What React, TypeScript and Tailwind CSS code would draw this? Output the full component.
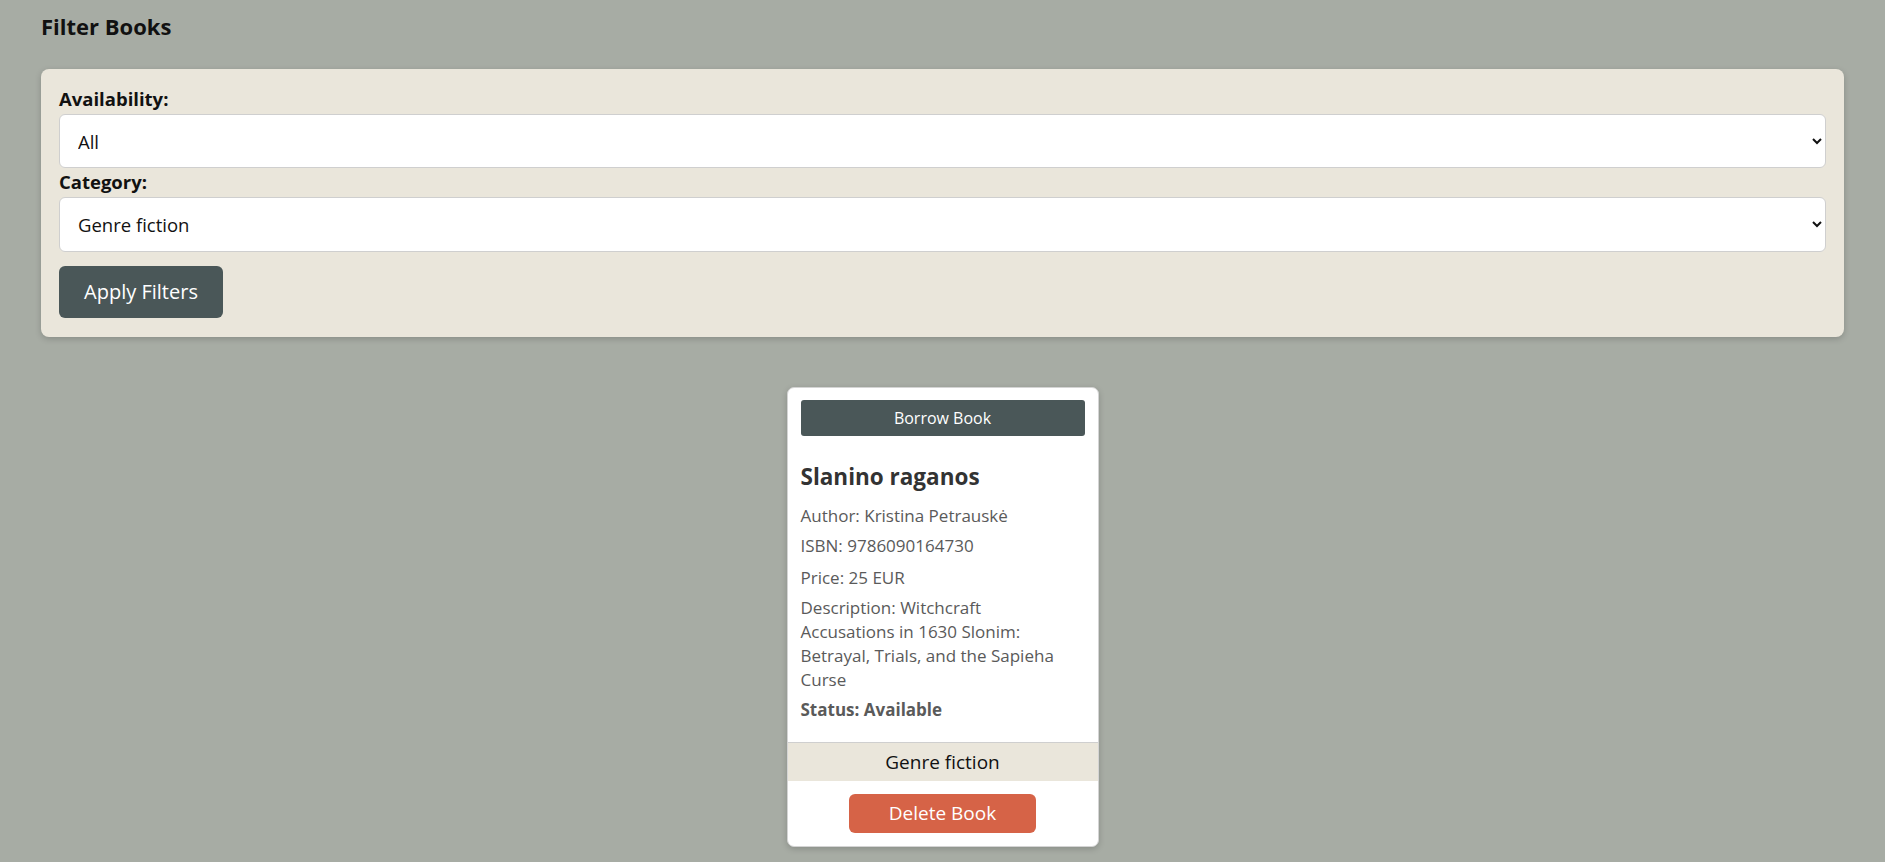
import React from "react";

export default function App() {
  return (
    <div className="min-h-screen bg-[#a7aca4] px-[41px] pt-[12px] pb-[16px] font-['Open_Sans','Noto_Sans',sans-serif] text-[#111]">
      <h2 className="text-[22px] font-bold leading-[29px] text-[#111]">Filter Books</h2>
      <div className="mt-[28px] rounded-[8px] bg-[#eae6db] px-[18px] pt-[19px] pb-[19px] shadow-[0_2px_6px_rgba(0,0,0,0.18)]">
        <label className="block text-[18.5px] font-bold leading-[22px] mb-[4px]">Availability:</label>
        <select
          defaultValue="All"
          className="block w-full h-[54px] rounded-[6px] border border-[#cfcfcf] bg-white pl-[14px] pr-[8px] text-[18.5px] text-[#111]"
        >
          <option>All</option>
          <option>Available</option>
          <option>Borrowed</option>
        </select>
        <label className="block text-[18.5px] font-bold leading-[22px] mt-[3px] mb-[4px]">Category:</label>
        <select
          defaultValue="Genre fiction"
          className="block w-full h-[55px] rounded-[6px] border border-[#cfcfcf] bg-white pl-[14px] pr-[8px] text-[18.5px] text-[#111]"
        >
          <option>Genre fiction</option>
          <option>Literary fiction</option>
          <option>Non-fiction</option>
        </select>
        <button className="mt-[14px] h-[52px] w-[164px] rounded-[6px] bg-[#4a5758] text-[20px] text-white">
          Apply Filters
        </button>
      </div>

      <div className="mx-auto mt-[50px] w-[312px] overflow-hidden rounded-[7px] border border-[#d4d4d4] bg-white shadow-[0_2px_6px_rgba(0,0,0,0.18)]">
        <div className="px-[13px] pt-[12px] pb-[20px]">
          <button className="block h-[36px] w-full rounded-[3px] bg-[#4a5758] text-[16px] text-white">
            Borrow Book
          </button>
          <h3 className="mt-[26px] text-[22.5px] font-bold leading-[29px] text-[#333]">Slanino raganos</h3>
          <div className="mt-[13px] text-[17px] leading-[24px] text-[#5a5a5a]">
            <p className="mb-[6px]">Author: Kristina Petrauskė</p>
            <p className="mb-[8px]">ISBN: 9786090164730</p>
            <p className="mb-[6px]">Price: 25 EUR</p>
            <p className="mb-[6px]">
              Description: Witchcraft
              <br />
              Accusations in 1630 Slonim:
              <br />
              Betrayal, Trials, and the Sapieha
              <br />
              Curse
            </p>
            <p className="font-bold">Status: Available</p>
          </div>
        </div>
        <div className="flex h-[39px] items-center justify-center border-t border-[#cfcfcf] bg-[#eae6db] text-[19px] text-[#111]">
          Genre fiction
        </div>
        <div className="flex justify-center pt-[13px] pb-[13px]">
          <button className="h-[39px] w-[187px] rounded-[6px] bg-[#d66347] text-[19px] text-white">
            Delete Book
          </button>
        </div>
      </div>
    </div>
  );
}
